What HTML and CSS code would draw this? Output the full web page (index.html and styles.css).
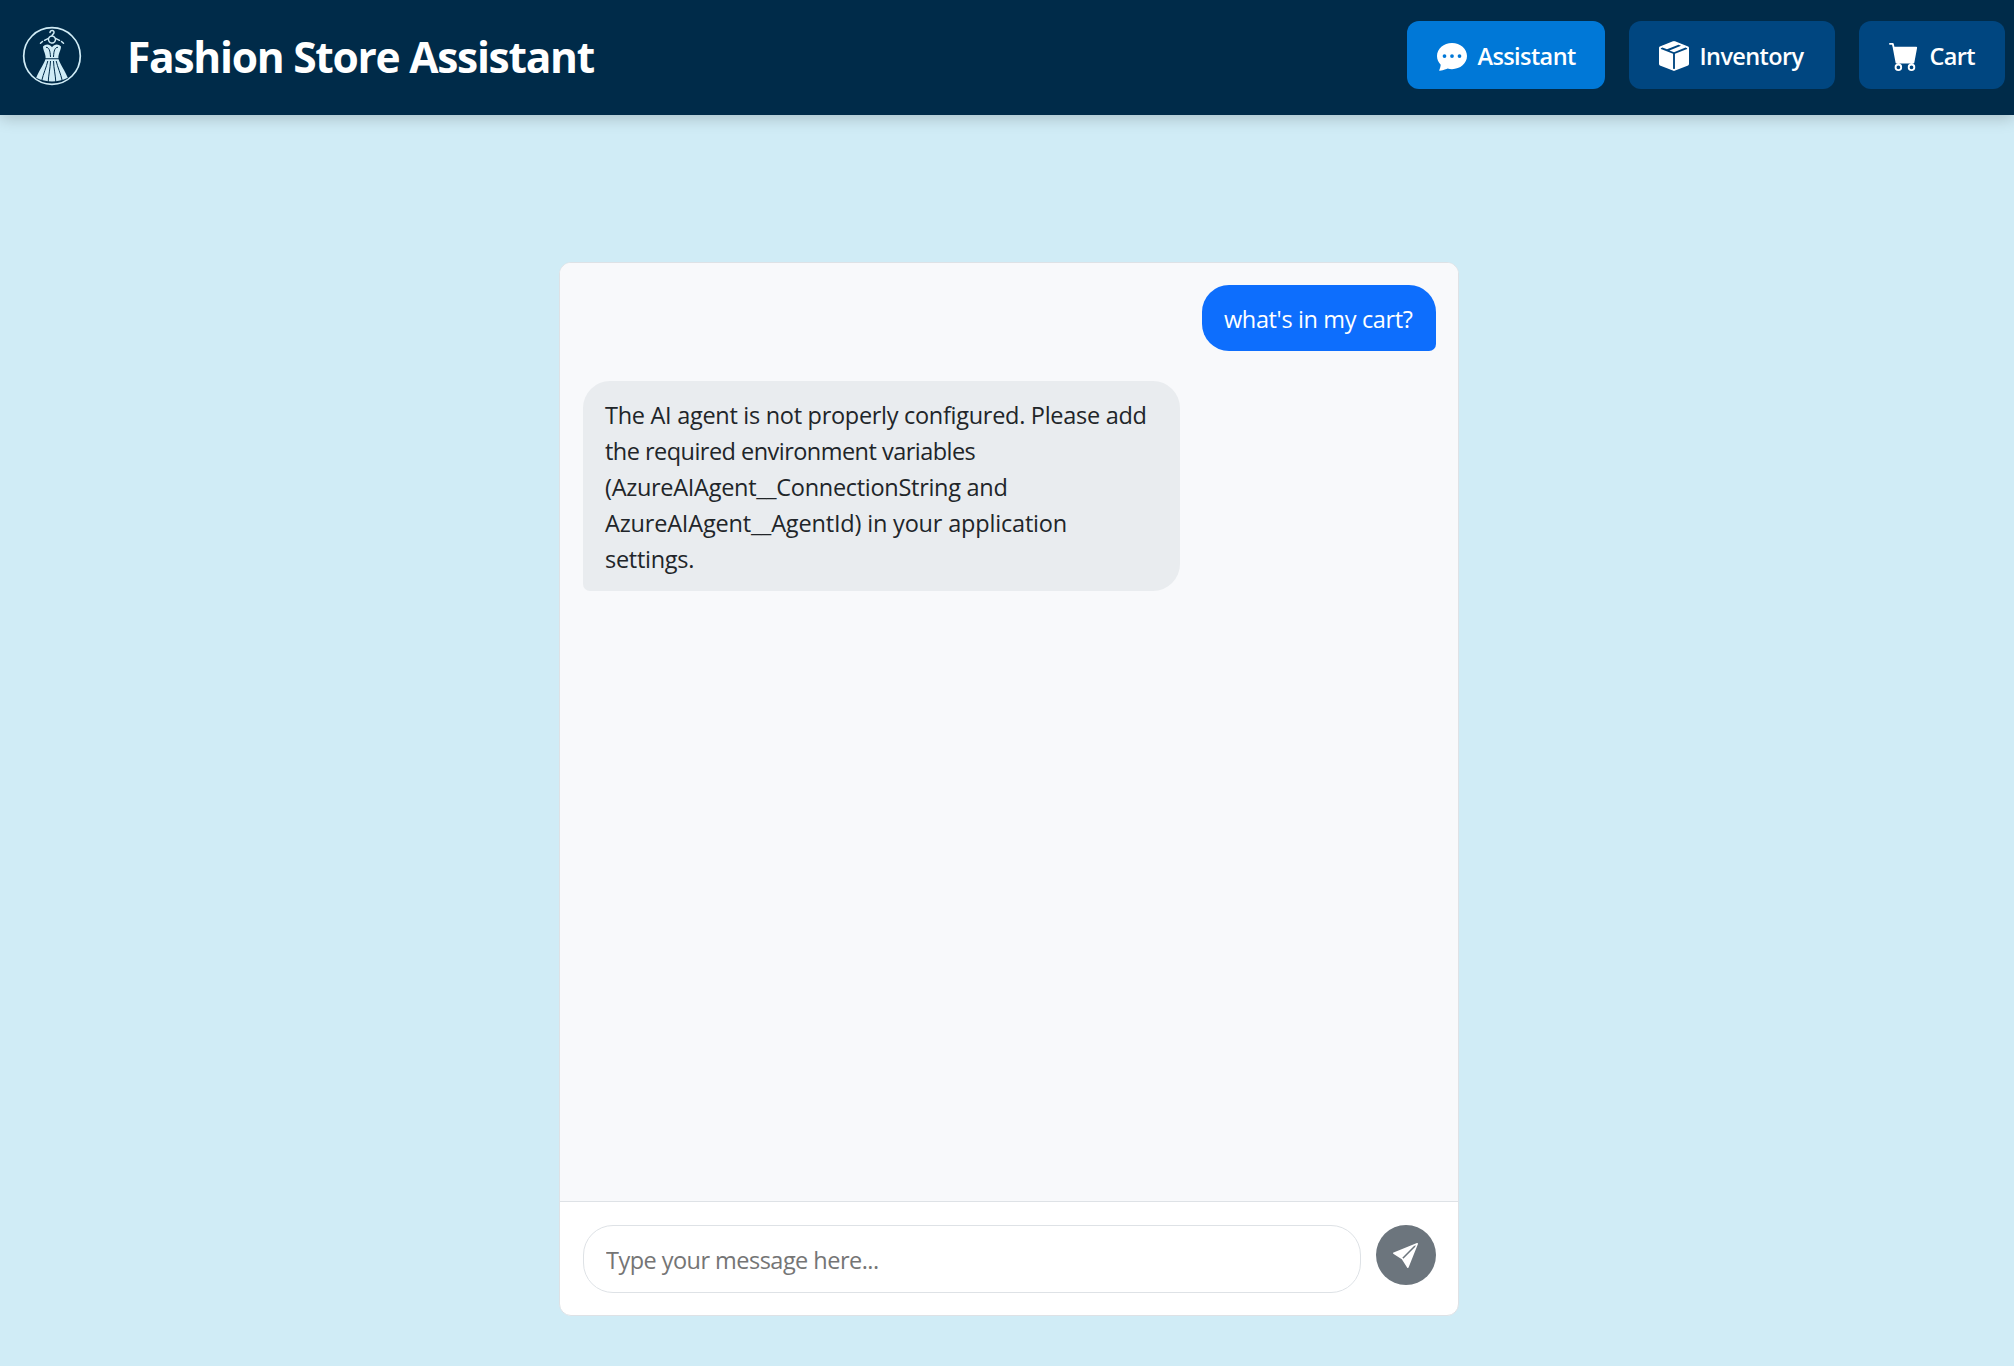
FILE: index.html
```html
<!DOCTYPE html>
<html lang="en">
<head>
<meta charset="utf-8">
<title>Fashion Store Assistant</title>
<link rel="stylesheet" href="styles.css">
</head>
<body>
<header class="topbar">
  <svg class="logo" viewBox="0 0 60 60" aria-hidden="true">
    <circle cx="30" cy="30" r="28.3" fill="none" stroke="#d0ecf6" stroke-width="1.7"/>
    <g fill="none" stroke="#d0ecf6" stroke-width="1.5" stroke-linecap="round">
      <path d="M28 6.6C28 3.6 32.4 3.8 32 6.6C31.8 8.2 30 8 30 10"/>
      <circle cx="30" cy="13.5" r="3.5" stroke-dasharray="2.6 1"/>
      <path d="M26 12.6L22.500 14.300M20.500 15.500L18.500 17.300M34 12.600L37.500 14.300M39.500 15.500L41.500 17.300"/>
    </g>
    <path fill="#d0ecf6" d="M21 20.500C23.500 17.800 27.500 17.600 30 21.300C32.500 17.600 36.500 17.800 39 20.500C39 24.500 36.200 27.500 36.400 32.300H23.600C23.800 27.500 21 24.500 21 20.500Z"/>
    <path fill="none" stroke="#002b49" stroke-width="1" d="M24 21.300C27 21.200 28.200 24.500 28.500 31M36 21.300C33 21.200 31.800 24.500 31.500 31"/>
    <path fill="#d0ecf6" d="M23.400 33.200H36.600C38.500 39 43 44.500 45.800 51.800Q38 55.600 30 55.600T14.200 51.800C17 44.500 21.500 39 23.400 33.200Z"/>
    <path fill="none" stroke="#002b49" stroke-width="1" d="M25.800 35C24.500 41 21.200 48 19.800 54.500M28.500 35C28.200 43 26.500 49 26.200 56M31.500 35C31.800 43 33.500 49 33.800 56M34.200 35C35.500 41 38.800 48 40.200 54.500"/>
  </svg>
  <h1 class="brand">Fashion Store Assistant</h1>
  <nav class="nav">
    <a class="nav-link active">
      <svg class="nav-icon" viewBox="0 0 16 16"><path d="M16 8c0 3.866-3.582 7-8 7a9 9 0 0 1-2.347-.306c-.584.296-1.925.864-4.181 1.234-.2.032-.352-.176-.273-.362.354-.836.674-1.950.77-2.966C.744 11.370 0 9.760 0 8c0-3.866 3.582-7 8-7s8 3.134 8 7M5 8a1 1 0 1 0-2 0 1 1 0 0 0 2 0m4 0a1 1 0 1 0-2 0 1 1 0 0 0 2 0m3 1a1 1 0 1 0 0-2 1 1 0 0 0 0 2"/></svg>
      <span>Assistant</span>
    </a>
    <a class="nav-link">
      <svg class="nav-icon" viewBox="0 0 16 16"><path fill-rule="evenodd" d="M15.528 2.973a.75.75 0 0 1 .472.696v8.662a.75.75 0 0 1-.472.696l-7.250 2.900a.75.75 0 0 1-.557 0l-7.250-2.900A.75.75 0 0 1 0 12.331V3.669a.75.75 0 0 1 .471-.696L7.443.184l.01-.003.268-.108a.75.75 0 0 1 .558 0l.269.108.01.003zM10.404 2 4.250 4.461 1.846 3.500 1 3.839v.4l6.500 2.600v7.922l.5.2.5-.2V6.840l6.500-2.600v-.4l-.846-.339L8 5.961 5.596 5l6.154-2.461z"/></svg>
      <span>Inventory</span>
    </a>
    <a class="nav-link">
      <svg class="nav-icon" viewBox="0 0 16 16"><path d="M0 1.500A.5.5 0 0 1 .5 1H2a.5.5 0 0 1 .485.379L2.890 3H14.500a.5.5 0 0 1 .491.592l-1.500 8A.5.5 0 0 1 13 12H4a.5.5 0 0 1-.491-.408L2.010 3.607 1.610 2H.5a.5.5 0 0 1-.5-.5M5 12a2 2 0 1 0 0 4 2 2 0 0 0 0-4m7 0a2 2 0 1 0 0 4 2 2 0 0 0 0-4m-7 1a1 1 0 1 1 0 2 1 1 0 0 1 0-2m7 0a1 1 0 1 1 0 2 1 1 0 0 1 0-2"/></svg>
      <span>Cart</span>
    </a>
  </nav>
</header>
<main class="page">
  <section class="chat">
    <div class="messages">
      <div class="bubble user">what's in my cart?</div>
      <div class="bubble bot">
        <span class="line">The AI agent is not properly configured. Please add</span>
        <span class="line tight">the required environment variables</span>
        <span class="line">(AzureAIAgent__ConnectionString and</span>
        <span class="line loose">AzureAIAgent__AgentId) in your application</span>
        <span class="line">settings.</span>
      </div>
    </div>
    <form class="composer">
      <input class="field" type="text" placeholder="Type your message here...">
      <button class="send" type="button" aria-label="Send">
        <svg class="send-icon" viewBox="0 0 16 16"><path d="M15.964.686a.5.5 0 0 0-.65-.65L.767 5.855H.766l-.452.18a.5.5 0 0 0-.082.887l.41.26.001.002 4.995 3.178 3.178 4.995.002.002.26.41a.5.5 0 0 0 .886-.083zm-1.833 1.890L6.637 10.070l-.215-.338a.5.5 0 0 0-.154-.154l-.338-.215 7.494-7.494 1.178-.471z"/></svg>
      </button>
    </form>
  </section>
</main>
</body>
</html>
```
FILE: styles.css
```css
* { box-sizing: border-box; }

body {
  margin: 0;
  min-height: 1366px;
  background: #d0ecf6;
  color: #212529;
  font-family: "Open Sans", "Noto Sans", sans-serif;
  font-size: 23.5px;
  line-height: 36px;
}

.topbar {
  display: flex;
  align-items: center;
  height: 115px;
  padding: 0 9px 5px 22px;
  background: #002b49;
  box-shadow: 0 3px 15px rgba(0, 0, 0, 0.2);
}

.logo { width: 60px; height: 60px; margin-top: 2px; }

.brand {
  margin: 3px 0 0 45px;
  color: #fff;
  font-size: 42.5px;
  line-height: 58px;
  font-weight: 700;
  letter-spacing: -1.27px;
  white-space: nowrap;
}

.nav { display: flex; gap: 24px; margin-left: auto; }

.nav-link {
  display: flex;
  align-items: center;
  gap: 10.5px;
  width: 198px;
  height: 68px;
  padding: 2px 0 0 30px;
  border-radius: 12px;
  background: #004680;
  color: #fff;
  font-weight: 600;
  letter-spacing: -0.6px;
}

.nav-link:nth-child(2) { width: 206px; }
.nav-link:nth-child(3) { width: 146px; }
.nav-link.active { background: #0078d7; }

.nav-icon { width: 30px; height: 30px; fill: currentColor; }

.page { padding-top: 147px; }

.chat {
  display: flex;
  flex-direction: column;
  width: 900px;
  height: 1054px;
  margin: 0 0 0 559px;
  border: 1px solid #dee2e6;
  border-radius: 12px;
  background: #fff;
  overflow: hidden;
}

.messages {
  display: flex;
  flex: 1;
  flex-direction: column;
  gap: 30px;
  padding: 22px 22px 22px 23px;
  background: #f8f9fb;
}

.bubble { padding: 16px 22px 14px; border-radius: 27px; }

.user {
  align-self: flex-end;
  width: 234px;
  border-bottom-right-radius: 7px;
  background: #0d6efd;
  color: #fff;
  letter-spacing: -0.36px;
  white-space: nowrap;
}

.bot {
  width: 597px;
  border-bottom-left-radius: 7px;
  background: #e9ecef;
  letter-spacing: -0.29px;
}

.line { display: block; white-space: nowrap; }
.tight { letter-spacing: -0.53px; }
.loose { letter-spacing: -0.18px; }

.composer {
  display: flex;
  align-items: flex-start;
  gap: 15px;
  height: 114px;
  padding: 23px 22px 0 23px;
  border-top: 1px solid #dee2e6;
}

.field {
  flex: 1;
  height: 68px;
  padding: 2px 22px 0;
  border: 1px solid #dee2e6;
  border-radius: 30px;
  background: #fff;
  font: inherit;
  letter-spacing: -0.53px;
}

.field::placeholder { color: #757575; }

.send {
  display: flex;
  align-items: center;
  justify-content: center;
  width: 60px;
  height: 60px;
  padding: 0 1px 0 0;
  border: 0;
  border-radius: 50%;
  background: #6c757d;
}

.send-icon { width: 25px; height: 25px; fill: #fff; }
```
